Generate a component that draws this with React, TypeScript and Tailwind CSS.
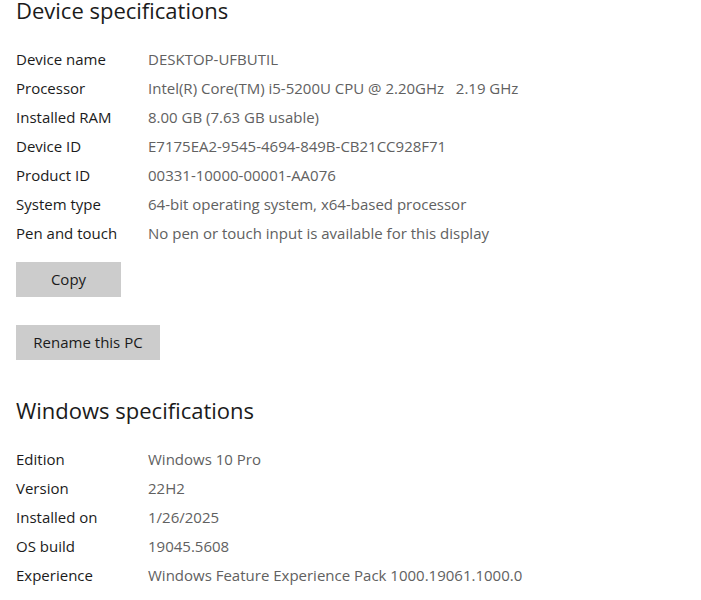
const deviceSpecs: [string, string][] = [
  ["Device name", "DESKTOP-UFBUTIL"],
  ["Processor", "Intel(R) Core(TM) i5-5200U CPU @ 2.20GHz   2.19 GHz"],
  ["Installed RAM", "8.00 GB (7.63 GB usable)"],
  ["Device ID", "E7175EA2-9545-4694-849B-CB21CC928F71"],
  ["Product ID", "00331-10000-00001-AA076"],
  ["System type", "64-bit operating system, x64-based processor"],
  ["Pen and touch", "No pen or touch input is available for this display"],
];

const windowsSpecs: [string, string][] = [
  ["Edition", "Windows 10 Pro"],
  ["Version", "22H2"],
  ["Installed on", "1/26/2025"],
  ["OS build", "19045.5608"],
  ["Experience", "Windows Feature Experience Pack 1000.19061.1000.0"],
];

function SpecRows({ rows }: { rows: [string, string][] }) {
  return (
    <div className="flex flex-col">
      {rows.map(([label, value]) => (
        <div key={label} className="flex h-[29px] items-center">
          <span className="w-[132px] shrink-0 text-[#1b1b1b]">{label}</span>
          <span className="whitespace-pre text-[#616161]">{value}</span>
        </div>
      ))}
    </div>
  );
}

export default function App() {
  return (
    <div
      className="min-h-[600px] w-[701px] bg-white px-4 text-[15px]"
      style={{ fontFamily: '"Open Sans", "Noto Sans", sans-serif' }}
    >
      <h1 className="text-[22px] leading-[20px] text-[#1b1b1b]">Device specifications</h1>

      <div className="mt-[25px]">
        <SpecRows rows={deviceSpecs} />
      </div>

      <div className="mt-[14px] flex flex-col items-start gap-[28px]">
        <button className="h-[35px] w-[105px] bg-[#cccccc] text-[#1b1b1b]">Copy</button>
        <button className="h-[35px] w-[144px] bg-[#cccccc] text-[#1b1b1b]">Rename this PC</button>
      </div>

      <h2 className="mt-[34px] text-[22px] leading-[32px] text-[#1b1b1b]">Windows specifications</h2>

      <div className="mt-[19px]">
        <SpecRows rows={windowsSpecs} />
      </div>
    </div>
  );
}
